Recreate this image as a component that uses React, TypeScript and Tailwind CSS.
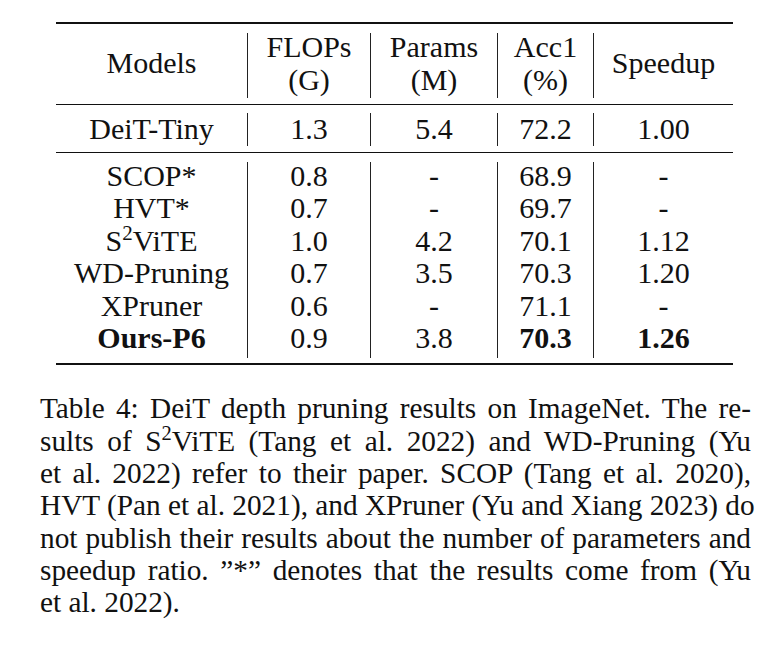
import React from "react";

const cols = [
  { w: "w-[191px]", head: ["Models"], deit: "DeiT-Tiny" },
  { w: "w-[123px]", head: ["FLOPs", "(G)"], deit: "1.3" },
  { w: "w-[127px]", head: ["Params", "(M)"], deit: "5.4" },
  { w: "w-[96px]", head: ["Acc1", "(%)"], deit: "72.2" },
  { w: "w-[140px]", head: ["Speedup"], deit: "1.00" },
];

type Cell = { t: React.ReactNode; b?: boolean };

const body: Cell[][] = [
  [
    { t: "SCOP*" },
    { t: "HVT*" },
    {
      t: (
        <>
          S<sup className="text-[0.7em]">2</sup>ViTE
        </>
      ),
    },
    { t: "WD-Pruning" },
    { t: "XPruner" },
    { t: "Ours-P6", b: true },
  ],
  [{ t: "0.8" }, { t: "0.7" }, { t: "1.0" }, { t: "0.7" }, { t: "0.6" }, { t: "0.9" }],
  [{ t: "-" }, { t: "-" }, { t: "4.2" }, { t: "3.5" }, { t: "-" }, { t: "3.8" }],
  [{ t: "68.9" }, { t: "69.7" }, { t: "70.1" }, { t: "70.3" }, { t: "71.1" }, { t: "70.3", b: true }],
  [{ t: "-" }, { t: "-" }, { t: "1.12" }, { t: "1.20" }, { t: "-" }, { t: "1.26", b: true }],
];

const captionLines: React.ReactNode[] = [
  "Table 4: DeiT depth pruning results on ImageNet. The re-",
  <>
    sults of S<sup className="text-[0.7em]">2</sup>ViTE (Tang et al. 2022) and WD-Pruning (Yu
  </>,
  "et al. 2022) refer to their paper. SCOP (Tang et al. 2020),",
  "HVT (Pan et al. 2021), and XPruner (Yu and Xiang 2023) do",
  "not publish their results about the number of parameters and",
  "speedup ratio. \u201D*\u201D denotes that the results come from (Yu",
];

export default function App() {
  return (
    <div className="w-[776px] h-[650px] bg-white text-[#111] font-['Liberation_Serif','Times_New_Roman',serif] pt-[22px] overflow-hidden">
      <div className="ml-[56px] w-[677px] text-[30px] leading-[32.5px]">
        {/* header */}
        <div className="flex border-t-[2px] border-b border-[#111] pt-[9px] pb-[6px]">
          {cols.map((c, i) => (
            <div
              key={i}
              className={`${c.w} h-[65px] pb-[4px] flex flex-col items-center justify-center ${i > 0 ? "border-l border-[#222]" : ""}`}
            >
              {c.head.map((h, j) => (
                <div key={j}>{h}</div>
              ))}
            </div>
          ))}
        </div>
        {/* DeiT row */}
        <div className="flex border-b border-[#111] pt-[8px] pb-[6px]">
          {cols.map((c, i) => (
            <div
              key={i}
              className={`${c.w} h-[33px] flex items-center justify-center ${i > 0 ? "border-l border-[#222]" : ""}`}
            >
              {c.deit}
            </div>
          ))}
        </div>
        {/* body */}
        <div className="flex border-b-[2px] border-[#111] pt-[9px] pb-[9px]">
          {cols.map((c, i) => (
            <div
              key={i}
              className={`${c.w} flex flex-col items-center pb-[4px] -mb-[4px] ${i > 0 ? "border-l border-[#222]" : ""}`}
            >
              <div className="-mt-[2px] flex flex-col items-center">
                {body[i].map((cell, j) => (
                  <div key={j} className={`h-[32.4px] ${cell.b ? "font-bold" : ""}`}>
                    {cell.t}
                  </div>
                ))}
              </div>
            </div>
          ))}
        </div>
      </div>

      {/* caption */}
      <div className="ml-[40px] w-[711px] mt-[27px] text-[29.3px] leading-[32.3px]">
        {captionLines.map((l, i) => (
          <div key={i} className="text-justify [text-align-last:justify] whitespace-nowrap">
            {l}
          </div>
        ))}
        <div>et al. 2022).</div>
      </div>
    </div>
  );
}
